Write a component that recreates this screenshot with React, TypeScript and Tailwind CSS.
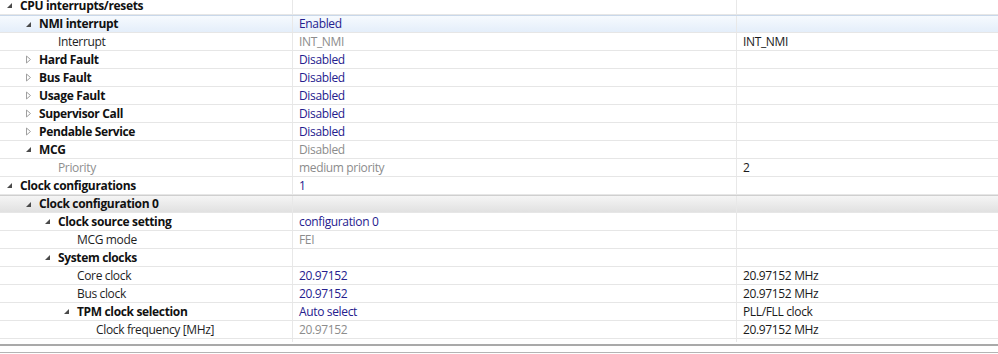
import React from "react";

type Row = {
  label: string;
  level: number;
  arrow?: "open" | "closed";
  bold?: boolean;
  grayLabel?: boolean;
  value?: string;
  valueGray?: boolean;
  info?: string;
  hl?: "blue" | "gray";
};

const rows: Row[] = [
  { label: "CPU interrupts/resets", level: 0, arrow: "open", bold: true },
  { label: "NMI interrupt", level: 1, arrow: "open", bold: true, value: "Enabled", hl: "blue" },
  { label: "Interrupt", level: 2, value: "INT_NMI", valueGray: true, info: "INT_NMI" },
  { label: "Hard Fault", level: 1, arrow: "closed", bold: true, value: "Disabled" },
  { label: "Bus Fault", level: 1, arrow: "closed", bold: true, value: "Disabled" },
  { label: "Usage Fault", level: 1, arrow: "closed", bold: true, value: "Disabled" },
  { label: "Supervisor Call", level: 1, arrow: "closed", bold: true, value: "Disabled" },
  { label: "Pendable Service", level: 1, arrow: "closed", bold: true, value: "Disabled" },
  { label: "MCG", level: 1, arrow: "open", bold: true, value: "Disabled", valueGray: true },
  { label: "Priority", level: 2, grayLabel: true, value: "medium priority", valueGray: true, info: "2" },
  { label: "Clock configurations", level: 0, arrow: "open", bold: true, value: "1" },
  { label: "Clock configuration 0", level: 1, arrow: "open", bold: true, hl: "gray" },
  { label: "Clock source setting", level: 2, arrow: "open", bold: true, value: "configuration 0" },
  { label: "MCG mode", level: 3, value: "FEI", valueGray: true },
  { label: "System clocks", level: 2, arrow: "open", bold: true },
  { label: "Core clock", level: 3, value: "20.97152", info: "20.97152 MHz" },
  { label: "Bus clock", level: 3, value: "20.97152", info: "20.97152 MHz" },
  { label: "TPM clock selection", level: 3, arrow: "open", bold: true, value: "Auto select", info: "PLL/FLL clock" },
  { label: "Clock frequency [MHz]", level: 4, value: "20.97152", valueGray: true, info: "20.97152 MHz" },
];

function Arrow({ kind }: { kind: "open" | "closed" }) {
  if (kind === "open") {
    return (
      <svg width="7" height="7" viewBox="0 0 7 7" className="block">
        <path d="M6 1 L6 6 L1 6 Z" fill="#4a4a4a" />
      </svg>
    );
  }
  return (
    <svg width="7" height="9" viewBox="0 0 7 9" className="block">
      <path d="M1.5 1 L5.5 4.5 L1.5 8 Z" fill="none" stroke="#a0a0a0" strokeWidth="1" />
    </svg>
  );
}

export default function App() {
  return (
    <div
      className="w-[998px] h-[354px] overflow-hidden bg-white relative text-[12px]"
      style={{ fontFamily: '"Open Sans", "Noto Sans", sans-serif' }}
    >
      <div className="-mt-[3px] flex flex-col">
        {rows.map((r, i) => {
          const bg =
            r.hl === "blue"
              ? "bg-gradient-to-b from-[#f6fafe] to-[#e4eefa] border-t border-t-[#c9d8ea]"
              : r.hl === "gray"
              ? "bg-gradient-to-b from-[#f5f5f5] to-[#e1e1e1] border-t border-t-[#cfcfcf]"
              : "";
          return (
            <div
              key={i}
              className={`flex h-[18px] border-b border-b-[#e6e6e6] box-border ${bg}`}
            >
              <div className="w-[293px] shrink-0 border-r border-r-[#e8e8e8] flex items-center relative">
                <div style={{ width: 6 + r.level * 19 }} className="shrink-0 flex justify-end pr-[2px]">
                </div>
                <div className="w-[14px] shrink-0 flex items-center">
                  {r.arrow ? <Arrow kind={r.arrow} /> : null}
                </div>
                <span
                  className={`whitespace-nowrap leading-none tracking-[-0.35px] ${
                    r.bold ? "font-bold text-[#111]" : r.grayLabel ? "text-[#8f8f8f]" : "text-[#1e1e1e]"
                  }`}
                >
                  {r.label}
                </span>
              </div>
              <div className="w-[444px] shrink-0 border-r border-r-[#e8e8e8] flex items-center pl-[6px]">
                {r.value ? (
                  <span
                    className={`whitespace-nowrap leading-none tracking-[-0.35px] ${
                      r.valueGray ? "text-[#8c8c8c]" : "text-[#25208e]"
                    }`}
                  >
                    {r.value}
                  </span>
                ) : null}
              </div>
              <div className="flex-1 flex items-center pl-[6px]">
                {r.info ? (
                  <span className="whitespace-nowrap leading-none tracking-[-0.35px] text-[#1a1a1a]">
                    {r.info}
                  </span>
                ) : null}
              </div>
            </div>
          );
        })}
        <div className="flex h-[3px]">
          <div className="w-[293px] shrink-0 border-r border-r-[#e8e8e8]" />
          <div className="w-[444px] shrink-0 border-r border-r-[#e8e8e8]" />
          <div className="flex-1" />
        </div>
      </div>
      <div className="mt-[2px] h-[2px] bg-[#a9a9a9]" />
      <div className="mt-[6px] h-[1px] bg-[#b4b4b4]" />
    </div>
  );
}
